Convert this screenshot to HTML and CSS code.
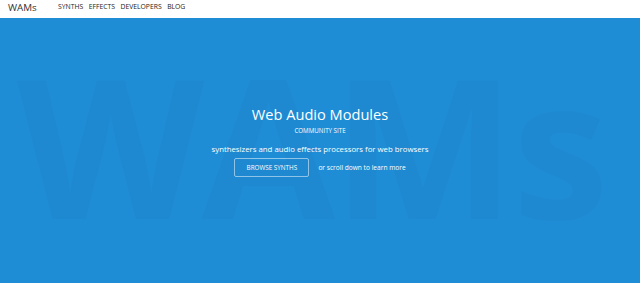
FILE: index.html
```html
<!doctype html>
<html lang="en">
  <head>
    <meta charset="UTF-8" />
    <meta name="viewport" content="width=device-width, initial-scale=1.0" />
    <title>Web Audio Modules</title>
    <link rel="stylesheet" href="styles.css">
  </head>
  <body>
    <header class="header">
      <a href="#" class="brand">WAMs</a>
      <ul class="nav-list">
        <li><a href="#" class="nav-link">Synths</a></li>
        <li><a href="#" class="nav-link">Effects</a></li>
        <li><a href="#" class="nav-link">Developers</a></li>
        <li><a href="#" class="nav-link">Blog</a></li>
      </ul>
    </header>

    <main class="splash">
      <div class="watermark" aria-hidden="true">WAMs</div>
      <div class="splash-content">
        <h1 class="splash-head">Web Audio Modules</h1>
        <p class="splash-tag">Community site</p>
        <p class="splash-subhead">synthesizers and audio effects processors for web browsers</p>
        <div class="splash-actions">
          <a href="#" class="button">Browse synths</a>
          <span class="scroll-hint">or scroll down to learn more</span>
        </div>
      </div>
    </main>
  </body>
</html>
```

FILE: styles.css
```css
* {
  margin: 0;
  padding: 0;
  box-sizing: border-box;
}

body {
  font-family: "Open Sans", "DejaVu Sans", sans-serif;
  background: #1f8dd6;
  height: 100vh;
  display: flex;
  flex-direction: column;
  overflow: hidden;
}

a {
  text-decoration: none;
}

.header {
  height: 18px;
  background: #fff;
  display: flex;
  align-items: center;
  padding: 0 8px 3px;
  line-height: 1;
}

.brand {
  color: #333;
  font-size: 9.8px;
  width: 50px;
}

.nav-list {
  display: flex;
  gap: 5.5px;
  list-style: none;
  font-size: 6.8px;
}

.nav-link {
  color: #222;
  text-transform: uppercase;
}

.splash {
  flex: 1;
  position: relative;
  display: flex;
  justify-content: center;
  align-items: center;
  padding-bottom: 20px;
  color: #fff;
}

.watermark {
  position: absolute;
  left: 17px;
  top: 10px;
  font-size: 194px;
  font-weight: 700;
  letter-spacing: -3px;
  color: rgba(0, 0, 0, 0.028);
  line-height: 1.2;
  white-space: nowrap;
}

.splash-content {
  position: relative;
  text-align: center;
}

.splash-head {
  font-size: 14.6px;
  font-weight: 400;
  line-height: 20px;
}

.splash-tag {
  font-size: 6.2px;
  text-transform: uppercase;
  margin-top: 2px;
}

.splash-subhead {
  font-size: 7.8px;
  margin-top: 9px;
}

.splash-actions {
  display: flex;
  align-items: center;
  justify-content: center;
  gap: 9px;
  margin-top: 4px;
}

.button {
  color: #fff;
  font-size: 6.3px;
  text-transform: uppercase;
  border: 1px solid rgba(255, 255, 255, 0.5);
  border-radius: 2px;
  padding: 4px 10px;
  width: 75px;
}

.scroll-hint {
  font-size: 6.6px;
}
```
